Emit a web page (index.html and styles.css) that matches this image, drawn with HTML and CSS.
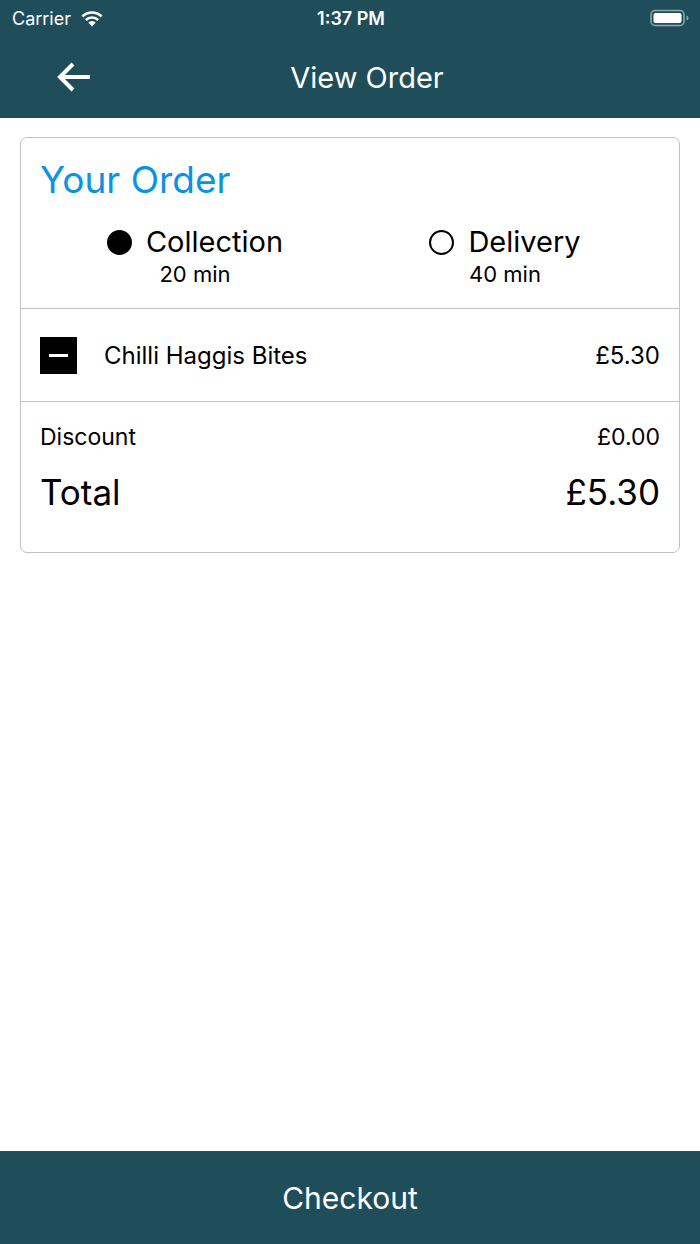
FILE: index.html
```html
<!DOCTYPE html>
<html lang="en">
<head>
    <meta charset="UTF-8">
    <meta name="viewport" content="width=device-width, initial-scale=1.0">
    <title>View Order</title>
    <link rel="stylesheet" href="styles.css">
</head>
<body>

<div class="screen">
    <header class="top">
        <div class="status-bar">
            <div class="status-left">
                <span>Carrier</span>
                <svg class="wifi" width="24" height="17" viewBox="0 0 24 17">
                    <path d="M12 16.5 L8.3 12.6 A5.3 5.3 0 0 1 15.7 12.6 Z" fill="#fff"/>
                    <path d="M4.9 9.1 A10 10 0 0 1 19.1 9.1 L17.3 11 A7.4 7.4 0 0 0 6.7 11 Z" fill="#fff"/>
                    <path d="M1.5 5.6 A14.8 14.8 0 0 1 22.5 5.6 L20.7 7.5 A12.2 12.2 0 0 0 3.3 7.5 Z" fill="#fff"/>
                </svg>
            </div>
            <div class="status-time">1:37 PM</div>
            <div class="status-right">
                <svg width="40" height="18" viewBox="0 0 40 18">
                    <rect x="1" y="1.5" width="33" height="15" rx="4" fill="none" stroke="rgba(255,255,255,0.5)" stroke-width="1.5"/>
                    <rect x="3.5" y="4" width="28" height="10" rx="2" fill="#fff"/>
                    <path d="M36.5 6.5 Q38.5 7 38.5 9 Q38.5 11 36.5 11.5 Z" fill="rgba(255,255,255,0.5)"/>
                </svg>
            </div>
        </div>
        <nav class="nav-bar">
            <svg class="back" width="36" height="32" viewBox="0 0 36 32">
                <path d="M34 16 H5 M17 3 L4 16 L17 29" fill="none" stroke="#fff" stroke-width="4"/>
            </svg>
            <h1 class="title">View Order</h1>
        </nav>
    </header>

    <main class="content">
        <div class="order-card">
            <section class="order-head">
                <h2>Your Order</h2>
                <div class="options">
                    <div class="option">
                        <div class="option-label"><span class="radio checked"></span>Collection</div>
                        <div class="option-time">20 min</div>
                    </div>
                    <div class="option">
                        <div class="option-label"><span class="radio"></span>Delivery</div>
                        <div class="option-time">40 min</div>
                    </div>
                </div>
            </section>

            <section class="order-items">
                <div class="item">
                    <span class="remove"></span>
                    <span class="item-name">Chilli Haggis Bites</span>
                    <span class="item-price">£5.30</span>
                </div>
            </section>

            <section class="order-totals">
                <div class="row discount">
                    <span>Discount</span>
                    <span>£0.00</span>
                </div>
                <div class="row total">
                    <span>Total</span>
                    <span>£5.30</span>
                </div>
            </section>
        </div>
    </main>

    <footer class="checkout">Checkout</footer>
</div>

</body>
</html>
```

FILE: styles.css
```css
body {
    margin: 0;
    font-family: Inter, "Liberation Sans", Arial, sans-serif;
    background-color: #fff;
    color: #000;
}
.screen {
    width: 700px;
    height: 1244px;
    display: flex;
    flex-direction: column;
}
.top {
    background-color: #1f4e5a;
    color: #fff;
    height: 118px;
}
.status-bar {
    height: 36px;
    display: grid;
    grid-template-columns: 1fr auto 1fr;
    align-items: center;
    padding: 0 10px 0 12px;
    font-size: 18px;
}
.status-left {
    display: flex;
    align-items: center;
    gap: 9px;
}
.status-time {
    font-weight: 600;
    font-size: 18px;
}
.status-right {
    display: flex;
    justify-content: flex-end;
}
.nav-bar {
    height: 82px;
    display: flex;
    align-items: center;
    padding: 0 58px 0 56px;
}
.back {
    flex: none;
}
.title {
    flex: 1;
    margin: 0;
    text-align: center;
    font-size: 29px;
    font-weight: 400;
}
.content {
    flex: 1;
    padding: 19px 20px;
}
.order-card {
    border: 1.5px solid #c2c2c2;
    border-radius: 7px;
}
.order-head {
    padding: 20px 19px 19px;
    border-bottom: 1.5px solid #c2c2c2;
}
.order-head h2 {
    margin: 0;
    color: #0a93e0;
    font-size: 37px;
    font-weight: 400;
    line-height: 44px;
}
.options {
    display: grid;
    grid-template-columns: 1fr 1fr;
    margin-top: 23px;
}
.option {
    text-align: center;
}
.option-label {
    display: inline-flex;
    align-items: center;
    gap: 14px;
    font-size: 29px;
    line-height: 34px;
}
.radio {
    width: 25px;
    height: 25px;
    border-radius: 50%;
    border: 2.5px solid #000;
    box-sizing: border-box;
}
.radio.checked {
    background-color: #000;
}
.option-time {
    font-size: 22px;
    line-height: 30px;
}
.order-items {
    padding: 0 19px;
    border-bottom: 1.5px solid #c2c2c2;
}
.item {
    height: 92px;
    display: flex;
    align-items: center;
}
.remove {
    width: 37px;
    height: 37px;
    background-color: #000;
    position: relative;
    margin-right: 27px;
}
.remove::after {
    content: "";
    position: absolute;
    left: 9px;
    right: 9px;
    top: 17px;
    height: 3px;
    background-color: #fff;
}
.item-name {
    flex: 1;
    font-size: 24px;
}
.item-price {
    font-size: 24px;
}
.order-totals {
    padding: 18px 19px 38px;
}
.row {
    display: flex;
    justify-content: space-between;
    align-items: center;
}
.discount {
    font-size: 23px;
    line-height: 34px;
}
.total {
    margin-top: 16px;
    font-size: 35px;
    line-height: 44px;
}
.checkout {
    height: 93px;
    background-color: #1f4e5a;
    color: #fff;
    display: flex;
    align-items: center;
    justify-content: center;
    font-size: 30px;
}
```
